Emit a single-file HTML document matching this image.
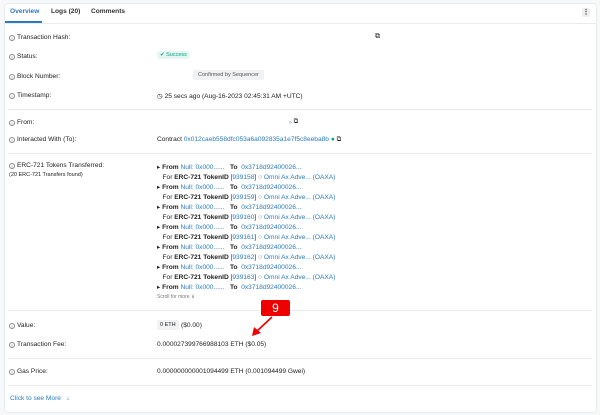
<!DOCTYPE html><html><head><style>
*{margin:0;padding:0;box-sizing:border-box}
body{width:600px;height:415px;background:#f7f8f9;font-family:"Liberation Sans",sans-serif;font-size:6.6px;color:#222;position:relative;overflow:hidden}
.card{position:absolute;left:4px;top:3px;width:593px;height:410px;background:#fff;border:1px solid #e9ecef;border-radius:4px}
.a{position:absolute;white-space:nowrap}
.q{display:inline-block;width:6px;height:6px;border:0.7px solid #888;border-radius:50%;font-size:4px;text-align:center;line-height:5px;color:#888;margin-right:2px;vertical-align:-1px}
.l{color:#2a7bc0}
.hr{position:absolute;left:8px;right:8px;height:1px;background:#e9ecef}
.g{color:#777}
b{font-weight:bold}
</style></head><body>
<div class="card"></div>
<div class="a" style="left:10px;top:8px;color:#2a7bc0;font-weight:bold">Overview</div>
<div class="a" style="left:51px;top:8px;font-weight:bold;color:#333">Logs (20)</div>
<div class="a" style="left:91px;top:8px;font-weight:bold;color:#333">Comments</div>
<div class="a" style="left:5px;top:21px;width:37px;height:2px;background:#2a7bc0"></div>
<div class="a" style="left:4px;top:23px;width:593px;height:1px;background:#e9ecef"></div>
<div class="a" style="left:582px;top:8px;width:8px;height:9px;background:#eee;border-radius:2px;font-size:7px;text-align:center;line-height:9px;font-weight:bold">⋮</div>
<div class="a" style="left:9px;top:34px"><span class="q">?</span>Transaction Hash:</div>
<div class="a" style="left:375px;top:33px;font-size:7px" >⧉</div>
<div class="a" style="left:9px;top:53px"><span class="q">?</span>Status:</div>
<div class="a" style="left:157px;top:51px;background:#e6f7f1;color:#00a186;padding:1px 3px;border-radius:3px;font-size:5.5px">✔ Success</div>
<div class="a" style="left:9px;top:73px"><span class="q">?</span>Block Number:</div>
<div class="a" style="left:193px;top:70px;background:#f1f2f4;color:#555;padding:2px 5px;border-radius:2px;font-size:5.5px">Confirmed by Sequencer</div>
<div class="a" style="left:9px;top:92px"><span class="q">?</span>Timestamp:</div>
<div class="a" style="left:157px;top:92px">◷ 25 secs ago (Aug-16-2023 02:45:31 AM +UTC)</div>
<div class="hr" style="top:109px"></div>
<div class="a" style="left:9px;top:119px"><span class="q">?</span>From:</div>
<div class="a" style="left:289px;top:118px"><span class="l">₀</span> ⧉</div>
<div class="a" style="left:9px;top:136px"><span class="q">?</span>Interacted With (To):</div>
<div class="a" style="left:157px;top:136px">Contract <span class="l">0x012caeb558dfc053a6a092835a1e7f5c8eeba8b</span> <span style="color:#00a186">●</span> ⧉</div>
<div class="hr" style="top:153px"></div>
<div class="a" style="left:9px;top:162px"><span class="q">?</span>ERC-721 Tokens Transferred:</div>
<div class="a" style="left:9px;top:172px;font-size:5.5px">(20 ERC-721 Transfers found)</div>
<div class="a" style="left:157px;top:163px;line-height:10px">
<div>▸ <b>From</b> <span class="l">Null: 0x000......</span> &nbsp; <b>To</b> &nbsp;<span class="l">0x3718d92400026...</span></div>
<div>&nbsp;&nbsp; For <b>ERC-721</b> <b>TokenID</b> [<span class="l">939158</span>] <span class="g">○</span> <span class="l">Omni Ax Adve... (OAXA)</span></div>
<div>▸ <b>From</b> <span class="l">Null: 0x000......</span> &nbsp; <b>To</b> &nbsp;<span class="l">0x3718d92400026...</span></div>
<div>&nbsp;&nbsp; For <b>ERC-721</b> <b>TokenID</b> [<span class="l">939159</span>] <span class="g">○</span> <span class="l">Omni Ax Adve... (OAXA)</span></div>
<div>▸ <b>From</b> <span class="l">Null: 0x000......</span> &nbsp; <b>To</b> &nbsp;<span class="l">0x3718d92400026...</span></div>
<div>&nbsp;&nbsp; For <b>ERC-721</b> <b>TokenID</b> [<span class="l">939160</span>] <span class="g">○</span> <span class="l">Omni Ax Adve... (OAXA)</span></div>
<div>▸ <b>From</b> <span class="l">Null: 0x000......</span> &nbsp; <b>To</b> &nbsp;<span class="l">0x3718d92400026...</span></div>
<div>&nbsp;&nbsp; For <b>ERC-721</b> <b>TokenID</b> [<span class="l">939161</span>] <span class="g">○</span> <span class="l">Omni Ax Adve... (OAXA)</span></div>
<div>▸ <b>From</b> <span class="l">Null: 0x000......</span> &nbsp; <b>To</b> &nbsp;<span class="l">0x3718d92400026...</span></div>
<div>&nbsp;&nbsp; For <b>ERC-721</b> <b>TokenID</b> [<span class="l">939162</span>] <span class="g">○</span> <span class="l">Omni Ax Adve... (OAXA)</span></div>
<div>▸ <b>From</b> <span class="l">Null: 0x000......</span> &nbsp; <b>To</b> &nbsp;<span class="l">0x3718d92400026...</span></div>
<div>&nbsp;&nbsp; For <b>ERC-721</b> <b>TokenID</b> [<span class="l">939163</span>] <span class="g">○</span> <span class="l">Omni Ax Adve... (OAXA)</span></div>
<div>▸ <b>From</b> <span class="l">Null: 0x000......</span> &nbsp; <b>To</b> &nbsp;<span class="l">0x3718d92400026...</span></div>
</div>
<div class="a" style="left:157px;top:294px;font-size:5px;color:#777">Scroll for more ↡</div>
<div class="hr" style="top:310px"></div>
<div class="a" style="left:261px;top:300px;width:29px;height:16px;background:#e00;border-radius:2px;color:#fff;font-size:12px;text-align:center;line-height:16px;z-index:5">9</div>
<svg class="a" style="left:248px;top:314px;z-index:5" width="30" height="26"><line x1="24" y1="3" x2="8" y2="18" stroke="#e00" stroke-width="1.6"/><polygon points="4,22 6,13 13,19" fill="#e00"/></svg>
<div class="a" style="left:9px;top:322px"><span class="q">?</span>Value:</div>
<div class="a" style="left:157px;top:320px;background:#f1f2f4;padding:2px 3px;border-radius:2px;font-size:5.5px">0 ETH</div>
<div class="a" style="left:181px;top:322px">($0.00)</div>
<div class="a" style="left:9px;top:341px"><span class="q">?</span>Transaction Fee:</div>
<div class="a" style="left:157px;top:341px">0.000027399766988103 ETH ($0.05)</div>
<div class="hr" style="top:358px"></div>
<div class="a" style="left:9px;top:368px"><span class="q">?</span>Gas Price:</div>
<div class="a" style="left:157px;top:368px">0.000000000001094499 ETH (0.001094499 Gwei)</div>
<div class="hr" style="top:385px"></div>
<div class="a" style="left:10px;top:395px;color:#2a7bc0">Click to see More &nbsp; ↓</div>
</body></html>
